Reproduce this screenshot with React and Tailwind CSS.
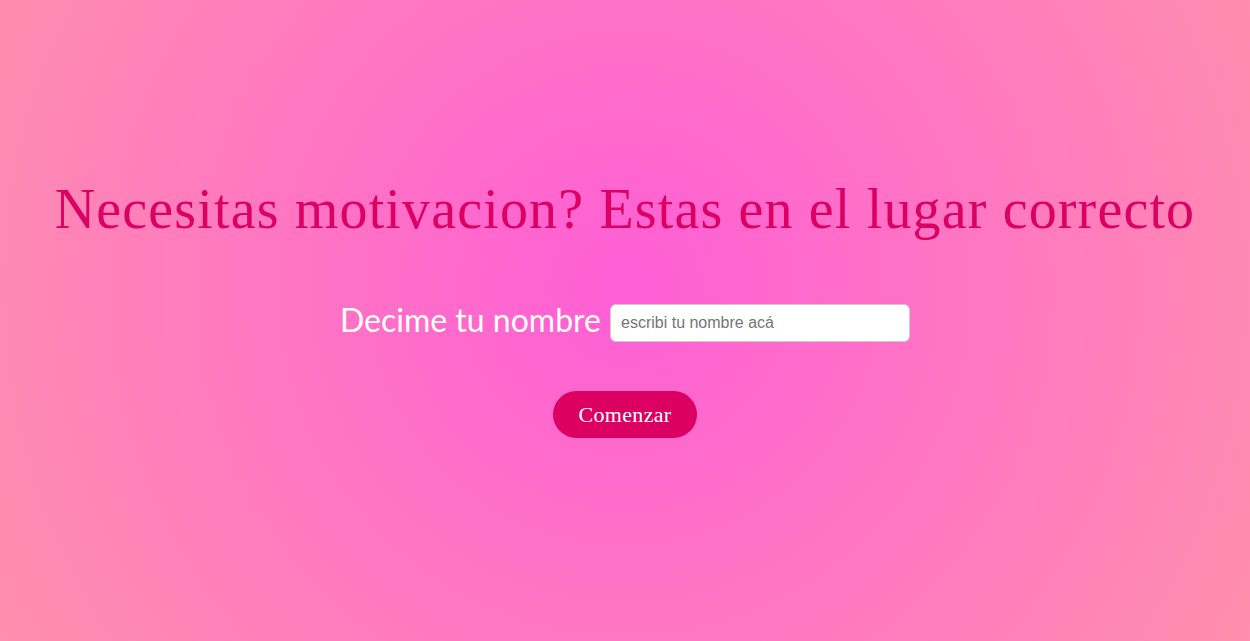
export default function App() {
  return (
    <div className="w-full h-[641px] flex flex-col items-center bg-[radial-gradient(circle_at_50%_45%,#ff5ed6_0%,#ff8fad_100%)]">
      <h1 className="mt-[177px] text-[56px] leading-[64px] tracking-[1.15px] text-[#dc0062] whitespace-nowrap font-['Liberation_Serif',serif]">
        Necesitas motivacion? Estas en el lugar correcto
      </h1>
      <div className="mt-[59px] flex items-center gap-[9px]">
        <span className="pb-[6px] text-[32px] leading-[40px] text-white font-['Lato',sans-serif]">
          Decime tu nombre
        </span>
        <input
          type="text"
          placeholder="escribi tu nombre acá"
          className="w-[300px] h-[38px] rounded-[6px] border border-[#cccccc] bg-white px-[10px] text-[16px] text-[#333333] placeholder:text-[#757575] outline-none font-['Liberation_Sans',Arial,sans-serif]"
        />
      </div>
      <button className="mt-[45px] w-[144px] h-[47px] rounded-full bg-[#dc0062] text-white text-[22px] tracking-[0.3px] font-['Liberation_Serif',serif]">
        Comenzar
      </button>
    </div>
  );
}
